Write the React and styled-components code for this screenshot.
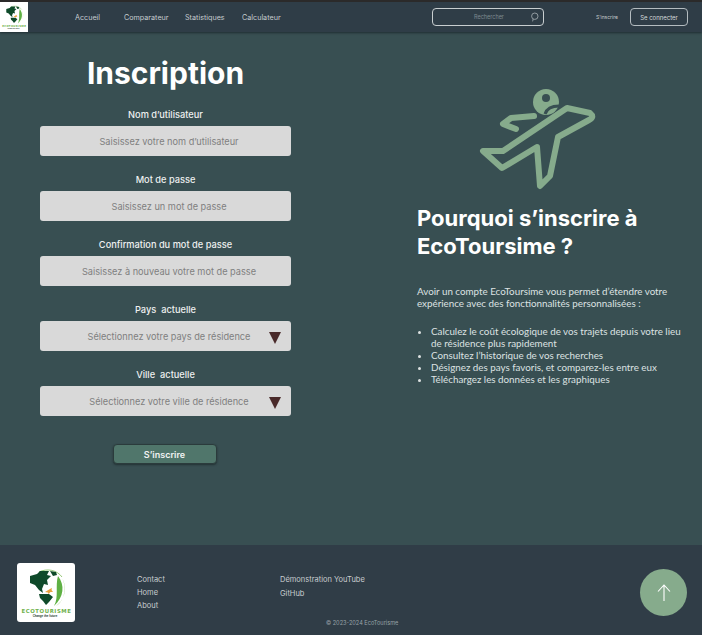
import { Fragment } from "react";
import styled, { createGlobalStyle } from "styled-components";

const GlobalStyle = createGlobalStyle`
  html, body {
    margin: 0;
    padding: 0;
    background: #384f52;
    font-family: "Inter", "Liberation Sans", sans-serif;
  }
`;

const Page = styled.div`
  width: 702px;
  height: 635px;
  display: flex;
  flex-direction: column;
  overflow: hidden;
`;

const Header = styled.header`
  height: 30px;
  flex: none;
  display: flex;
  align-items: center;
  background: #2f3d47;
  border-top: 2px solid #2b2a2a;
  box-shadow: 0 1px 2px rgba(20, 30, 35, 0.7);
  position: relative;
  padding-right: 14px;
`;

const HeaderLogo = styled.div`
  width: 28px;
  height: 30px;
  background: #fff;
  flex: none;
`;

const Nav = styled.nav`
  display: flex;
  margin-left: 47px;
`;

const NavLink = styled.a`
  color: #c6cccf;
  font-size: 7.2px;
  width: ${(p) => p.$w}px;
`;

const Search = styled.div`
  width: 112px;
  height: 18px;
  box-sizing: border-box;
  margin-left: auto;
  border: 1px solid #c8ced0;
  border-radius: 4px;
  display: flex;
  align-items: center;
  justify-content: flex-end;
  padding-right: 4px;
  color: #7d8a90;
  font-size: 5.5px;
  gap: 26px;
`;

const SignUp = styled.a`
  margin-left: 52px;
  color: #c6cccf;
  font-size: 5px;
`;

const LoginButton = styled.button`
  width: 58px;
  height: 18px;
  margin-left: 12px;
  background: transparent;
  border: 1px solid #b4bcc0;
  border-radius: 4px;
  color: #d4d9db;
  font: 6px "Inter", sans-serif;
  padding: 0;
`;

const Main = styled.main`
  flex: 1;
  display: flex;
  background: #384f52;
`;

const FormColumn = styled.form`
  width: 251px;
  margin-left: 40px;
  display: flex;
  flex-direction: column;
  align-items: center;
`;

const Title = styled.h1`
  margin: 20px 0 14px;
  color: #fff;
  font-size: 30px;
  line-height: 42px;
  font-weight: 700;
`;

const Label = styled.label`
  color: #eef0f0;
  font-size: 9.25px;
  line-height: 14px;
  font-weight: 500;
  margin-bottom: 4px;
  white-space: pre;
`;

const Field = styled.div`
  width: 100%;
  height: 30px;
  box-sizing: border-box;
  margin-bottom: 17px;
  background: #d9d9d9;
  border-radius: 3px;
  color: #7f7f7f;
  font-size: 9.2px;
  display: flex;
  align-items: center;
  justify-content: center;
  padding-left: 7px;
  position: relative;
`;

const Arrow = styled.span`
  position: absolute;
  right: 10px;
  top: 11px;
  width: 0;
  height: 0;
  border-left: 6.5px solid transparent;
  border-right: 6.5px solid transparent;
  border-top: 12px solid #4a2a2a;
`;

const Submit = styled.button`
  width: 104px;
  height: 20px;
  margin: 11px 2px 0 0;
  background: #50766b;
  border: 1px solid #2b3b3c;
  border-radius: 4px;
  box-shadow: 0 1px 2px rgba(20, 30, 30, 0.6);
  color: #f0f2f2;
  font: 600 9px "Inter", sans-serif;
  padding: 0;
`;

const InfoColumn = styled.section`
  width: 268px;
  margin-left: 126px;
  display: flex;
  flex-direction: column;
`;

const PlaneWrap = styled.div`
  margin: 48px 0 0 33px;
  height: 120px;
`;

const InfoTitle = styled.h2`
  margin: 4px 0 0;
  color: #fff;
  font-size: 22px;
  line-height: 28px;
  font-weight: 700;
`;

const InfoText = styled.p`
  margin: 25px 0 0;
  color: #dde2e2;
  font-family: "Lato", "Liberation Sans", sans-serif;
  font-size: 9.8px;
  line-height: 12px;
`;

const InfoList = styled.ul`
  margin: 16px 0 0;
  padding: 0 0 0 14px;
  color: #dde2e2;
  font-family: "Lato", "Liberation Sans", sans-serif;
  font-size: 9.8px;
  line-height: 12px;
`;

const Footer = styled.footer`
  height: 90px;
  flex: none;
  box-sizing: border-box;
  background: #303d47;
  padding: 18px 15px 0 17px;
  display: grid;
  grid-template-columns: 120px 143px 1fr 47px;
  grid-template-rows: 44px 1fr;
`;

const FooterLogo = styled.div`
  grid-row: 1 / 3;
  width: 58px;
  height: 59px;
  background: #fff;
  border-radius: 3px;
  overflow: hidden;
`;

const FooterLinks = styled.div`
  display: flex;
  flex-direction: column;
  gap: ${(p) => p.$gap}px;
  padding-top: 12px;
`;

const FooterLink = styled.a`
  color: #c8cdd0;
  font-size: 7.5px;
  line-height: 9.7px;
`;

const Copyright = styled.div`
  grid-column: 2 / 4;
  margin: 13px 0 0 189px;
  color: #99a2a8;
  font-size: 5.6px;
`;

const TopButton = styled.button`
  grid-column: 4;
  grid-row: 1;
  width: 47px;
  height: 47px;
  margin-top: 6px;
  border: none;
  border-radius: 50%;
  background: #86ab8c;
  padding: 0;
  display: flex;
  align-items: center;
  justify-content: center;
`;

const Logo = () => (
  <svg width="100%" height="100%" viewBox="0 0 58 59">
    <path d="M22 9 C30 5 40 7 45 14" fill="none" stroke="#7dbb57" strokeWidth="0.8" />
    <path d="M13 13 L20 11 L23 8 L32 8 L30 12 L34 13 L30 17 L31 22 L27 21 L25 26 L26 30 L22 27 L18 22 L13 20 Z" fill="#0f4a2a" />
    <path d="M22 31 L32 31 L36 34 L32 39 L29 42 L26 38 L23 35 Z" fill="#0f4a2a" />
    <path d="M33 8 L39 9 L40 12 L36 13 Z" fill="#0f4a2a" />
    <path d="M41 13 C48 22 47 34 37 43 C42 34 38 23 41 13 Z" fill="#5fb044" />
    <path d="M43 12 C51 22 49 36 39 43 C48 38 51 22 43 12 Z" fill="#9ccb78" />
    <path d="M28 29 L33 26 L35 25 L34.5 27 L36 29 L33.5 29 L31.5 31 L31 29.5 Z" fill="#e8a23c" />
    <text x="29.5" y="49.5" textAnchor="middle" fontFamily="DejaVu Sans" fontWeight="700" fontSize="5.4" letterSpacing="0.55" fill="#6fb24d">ECOTOURISME</text>
    <text x="28" y="54" textAnchor="middle" fontFamily="Liberation Sans" fontWeight="700" fontSize="2.9" fill="#1c3a2a">Change the future</text>
  </svg>
);

const Plane = () => (
  <svg width="170" height="120" viewBox="0 0 170 120">
    <circle cx="96" cy="22" r="13" fill="#86ab8c" />
    <circle cx="96" cy="18" r="4" fill="#384f52" />
    <path
      d="M33 71 L53 71 L117 28 L140 33 Q145 37 139 40 L108 57 L100 96 L90 106 L87 67 L52 88 Z"
      fill="#384f52"
      stroke="#86ab8c"
      strokeWidth="6"
      strokeLinejoin="round"
    />
    <path d="M95 34 C97 28 103 26 109 26" fill="none" stroke="#384f52" strokeWidth="3" />
    <path d="M84 36 L61 38 L53 44 L66 49" fill="none" stroke="#86ab8c" strokeWidth="6" strokeLinejoin="round" strokeLinecap="round" />
  </svg>
);

const fields = [
  { label: "Nom d’utilisateur", hint: "Saisissez votre nom d’utilisateur" },
  { label: "Mot de passe", hint: "Saisissez un mot de passe" },
  { label: "Confirmation du mot de passe", hint: "Saisissez à nouveau votre mot de passe" },
  { label: "Pays  actuelle", hint: "Sélectionnez votre pays de résidence", select: true },
  { label: "Ville  actuelle", hint: "Sélectionnez votre ville de résidence", select: true },
];

const App = () => {
  return (
    <Page>
      <GlobalStyle />
      <Header>
        <HeaderLogo>
          <Logo />
        </HeaderLogo>
        <Nav>
          <NavLink $w={49}>Accueil</NavLink>
          <NavLink $w={61}>Comparateur</NavLink>
          <NavLink $w={57}>Statistiques</NavLink>
          <NavLink $w={50}>Calculateur</NavLink>
        </Nav>
        <Search>
          Rechercher
          <svg width="9" height="10" viewBox="0 0 9 10" fill="none" stroke="#aab2b6" strokeWidth="0.8">
            <circle cx="4.8" cy="4.2" r="3.2" />
            <path d="M3.2 7 L2.6 9.4" />
          </svg>
        </Search>
        <SignUp>S’inscrire</SignUp>
        <LoginButton>Se connecter</LoginButton>
      </Header>
      <Main>
        <FormColumn>
          <Title>Inscription</Title>
          {fields.map((f) => (
            <Fragment key={f.label}>
              <Label>{f.label}</Label>
              <Field>
                {f.hint}
                {f.select && <Arrow />}
              </Field>
            </Fragment>
          ))}
          <Submit type="button">S’inscrire</Submit>
        </FormColumn>
        <InfoColumn>
          <PlaneWrap>
            <Plane />
          </PlaneWrap>
          <InfoTitle>
            Pourquoi s’inscrire à
            <br />
            EcoToursime ?
          </InfoTitle>
          <InfoText>
            Avoir un compte EcoToursime vous permet d’étendre votre expérience avec des fonctionnalités personnalisées :
          </InfoText>
          <InfoList>
            <li>Calculez le coût écologique de vos trajets depuis votre lieu de résidence plus rapidement</li>
            <li>Consultez l’historique de vos recherches</li>
            <li>Désignez des pays favoris, et comparez-les entre eux</li>
            <li>Téléchargez les données et les graphiques</li>
          </InfoList>
        </InfoColumn>
      </Main>
      <Footer>
        <FooterLogo>
          <Logo />
        </FooterLogo>
        <FooterLinks $gap={3.3}>
          <FooterLink>Contact</FooterLink>
          <FooterLink>Home</FooterLink>
          <FooterLink>About</FooterLink>
        </FooterLinks>
        <FooterLinks $gap={4.5}>
          <FooterLink>Démonstration YouTube</FooterLink>
          <FooterLink>GitHub</FooterLink>
        </FooterLinks>
        <TopButton aria-label="Haut de page">
          <svg width="20" height="20" viewBox="0 0 20 20" fill="none" stroke="#ffffff" strokeWidth="1.1">
            <path d="M10 18 V2 M4 8.5 L10 2 L16 8.5" />
          </svg>
        </TopButton>
        <Copyright>© 2023-2024 EcoTourisme</Copyright>
      </Footer>
    </Page>
  );
};

export default App;
